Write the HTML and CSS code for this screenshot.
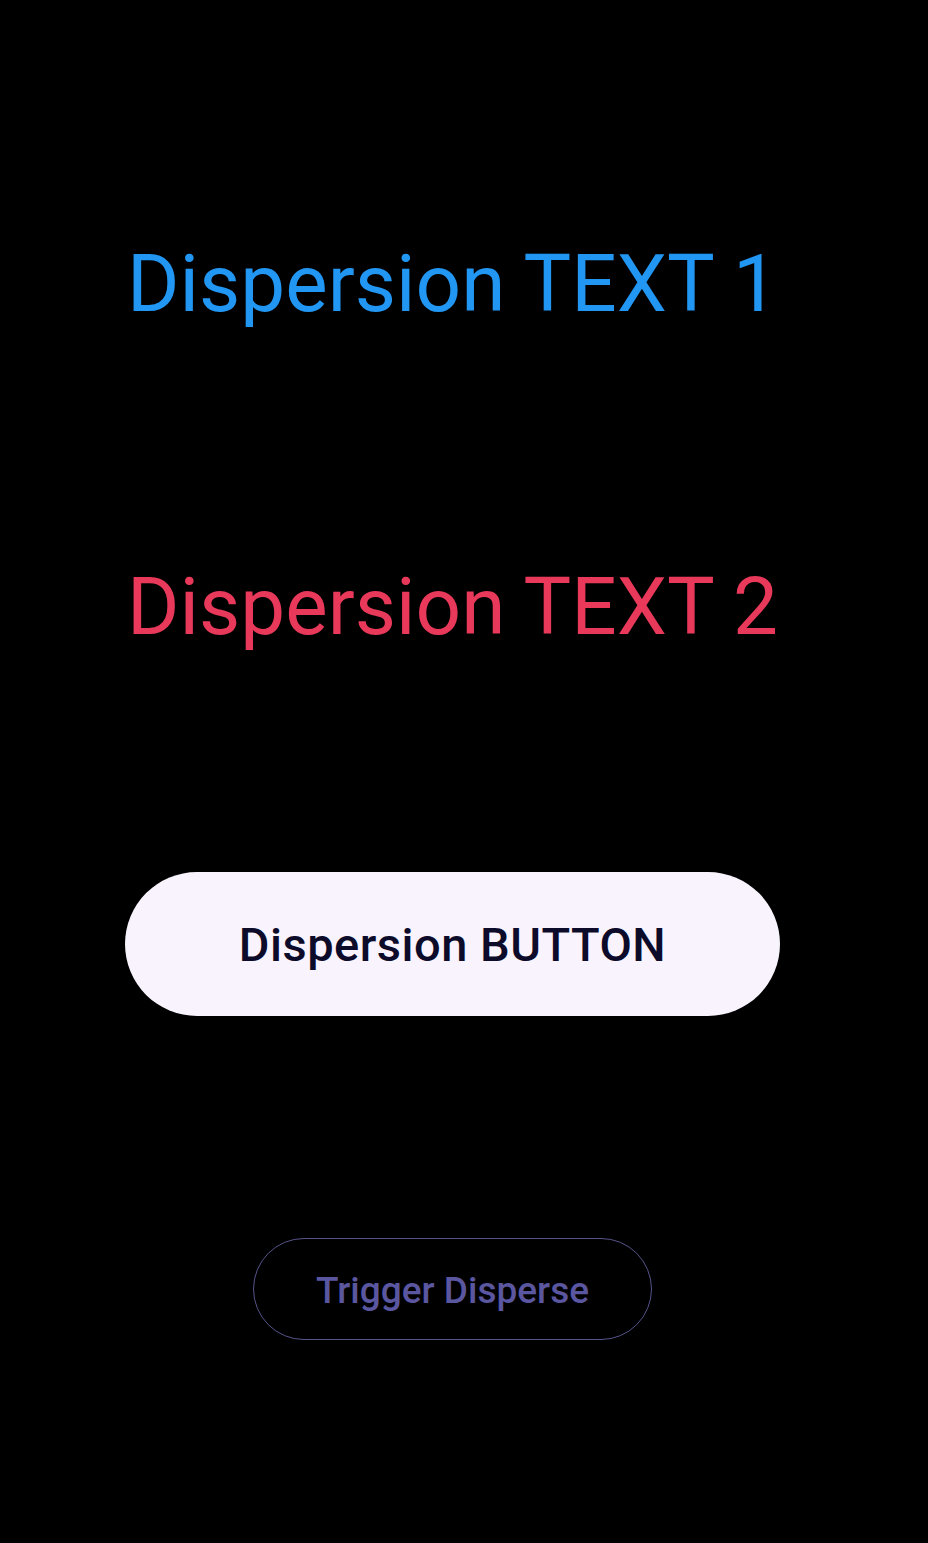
FILE: index.html
```html
<!DOCTYPE html>
<html lang="en">
<head>
<meta charset="utf-8">
<title>Dispersion</title>
<link rel="stylesheet" href="styles.css">
</head>
<body>
<main class="screen">
  <h1 class="disp-text disp-text--blue">Dispersion TEXT 1</h1>
  <h1 class="disp-text disp-text--red">Dispersion TEXT 2</h1>
  <button class="disp-button" type="button">Dispersion BUTTON</button>
  <button class="trigger-button" type="button">Trigger Disperse</button>
</main>
</body>
</html>
```

FILE: styles.css
```css
html, body {
  margin: 0;
  padding: 0;
  background: #000;
}

body {
  font-family: Roboto, "Noto Sans", sans-serif;
}

.screen {
  box-sizing: border-box;
  width: 928px;
  min-height: 1543px;
  display: flex;
  flex-direction: column;
  align-items: center;
  padding: 236px 23px 0 0;
}

.disp-text {
  margin: 0;
  font-size: 80px;
  line-height: 96px;
  font-weight: 400;
  white-space: nowrap;
}

.disp-text--blue {
  color: #2196f3;
}

.disp-text--red {
  color: #e8395a;
  margin-top: 227px;
}

.disp-button {
  margin-top: 217px;
  width: 655px;
  height: 144px;
  border: none;
  border-radius: 72px;
  background: #f8f3fc;
  color: #0d0b2a;
  font-family: Roboto, "Noto Sans", sans-serif;
  font-size: 47px;
  font-weight: 500;
  letter-spacing: 0.5px;
  padding: 0;
}

.trigger-button {
  margin-top: 222px;
  width: 399px;
  height: 102px;
  border: 1.5px solid #55548a;
  border-radius: 51px;
  background: transparent;
  color: #5a56a0;
  font-family: Roboto, "Noto Sans", sans-serif;
  font-size: 37px;
  font-weight: 500;
  padding: 2px 0 0;
}
```
